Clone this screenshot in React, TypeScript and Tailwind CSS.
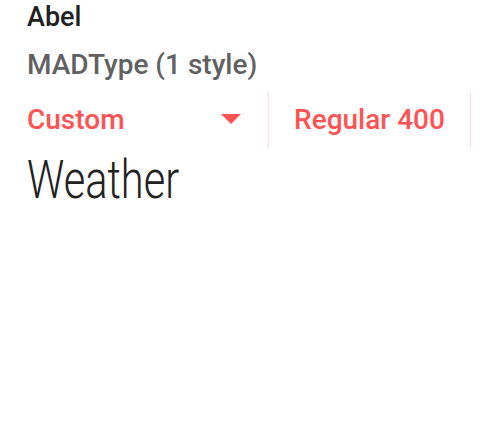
import React from 'react';

export default function App() {
  return (
    <div className="h-[434px] w-[498px] overflow-hidden bg-white font-['Roboto',sans-serif]">
      <div className="flex flex-col px-[27px]">
        <div className="pt-[1px] text-[27px] font-medium leading-[32px] text-[#212121]">Abel</div>
        <div className="mt-[16px] text-[28px] font-medium leading-[32px] text-[#616161]">MADType (1 style)</div>
        <div className="mt-[11px] flex h-[56px] items-stretch">
          <div className="flex w-[242px] items-center justify-between border-r border-[#fcdcdc] pr-[27px]">
            <span className="text-[28px] font-medium text-[#ff5252]">Custom</span>
            <svg width="20" height="10" viewBox="0 0 20 10" className="mb-[2px]">
              <path d="M0 0h20L10 10z" fill="#ff5252" />
            </svg>
          </div>
          <div className="flex w-[202px] items-center justify-center border-r border-[#fcdcdc]">
            <span className="text-[28px] font-medium text-[#ff5252]">Regular 400</span>
          </div>
        </div>
        <div className="mt-[4px] origin-left scale-x-[0.77] text-[54px] font-light leading-[56px] text-[#212121]">
          Weather
        </div>
      </div>
    </div>
  );
}
